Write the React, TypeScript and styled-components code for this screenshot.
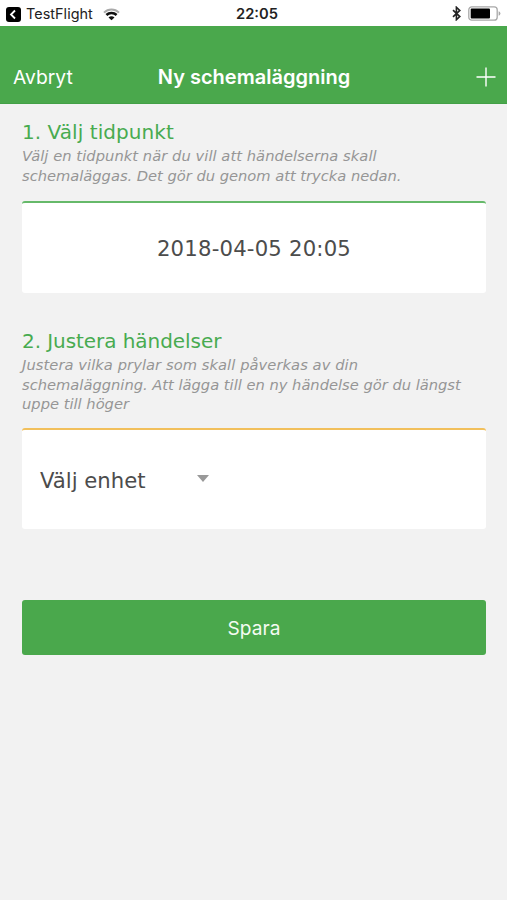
import React from "react";
import styled, { createGlobalStyle } from "styled-components";

const GlobalStyle = createGlobalStyle`
  * { box-sizing: border-box; }
  body { margin: 0; background: #f2f2f2; }
`;

const system = `"Inter", "Roboto", sans-serif`;
const body = `"DejaVu Sans", "Open Sans", sans-serif`;

const Screen = styled.div`
  display: flex;
  flex-direction: column;
  width: 507px;
  height: 900px;
  background: #f2f2f2;
  overflow: hidden;
  white-space: nowrap;
`;

const StatusBar = styled.div`
  display: grid;
  grid-template-columns: 1fr auto 1fr;
  align-items: center;
  height: 26px;
  padding: 2px 6px 0;
  background: #fff;
  color: #222;
  font: 400 14.4px/20px ${system};
`;

const StatusLeft = styled.div`
  display: flex;
  align-items: center;
`;

const BackLabel = styled.span`
  margin: 0 10px 0 5px;
  letter-spacing: 0.05px;
`;

const Clock = styled.span`
  font-size: 14.7px;
  font-weight: 600;
  padding-left: 7px;
`;

const StatusRight = styled.div`
  display: flex;
  align-items: center;
  justify-content: flex-end;
  gap: 7px;
  padding-bottom: 2px;
`;

const NavBar = styled.header`
  display: grid;
  grid-template-columns: 1fr auto 1fr;
  align-items: center;
  height: 78px;
  padding: 25px 11px 0 13px;
  background: #4aa84c;
  border-bottom: 1px solid #43a047;
  color: #fff;
`;

const NavButton = styled.button<{ $end?: boolean }>`
  display: flex;
  justify-self: ${(p) => (p.$end ? "end" : "start")};
  padding: 0;
  border: 0;
  background: none;
  color: inherit;
  font: 400 19.3px/24px ${system};
`;

const Title = styled.h1`
  margin: 0 1px 1px 0;
  font: 600 20px/24px ${system};
`;

const Content = styled.main`
  display: flex;
  flex-direction: column;
  padding: 16px 21px 0 22px;
`;

const Heading = styled.h2<{ $tracking: number }>`
  margin: 0;
  color: #48ab50;
  font: 400 20px/24px ${body};
  letter-spacing: ${(p) => p.$tracking}px;
`;

const Hint = styled.p`
  margin: 2px 0 0;
  color: #969696;
  font: italic 400 14.7px/19.5px ${body};
`;

const HintLine = styled.span<{ $tracking?: number }>`
  display: block;
  letter-spacing: ${(p) => p.$tracking ?? 0}px;
`;

const Card = styled.div<{ $accent: string; $height: number; $gap: number }>`
  display: flex;
  align-items: center;
  height: ${(p) => p.$height}px;
  margin-top: ${(p) => p.$gap}px;
  border-top: 2px solid ${(p) => p.$accent};
  border-radius: 3px;
  background: #fff;
  color: #4c4c4c;
`;

const DateValue = styled.span`
  flex: 1;
  padding-top: 1px;
  text-align: center;
  font: 400 21.2px/26px ${body};
  letter-spacing: 0.2px;
`;

const Section = styled.section<{ $gap?: number }>`
  margin-top: ${(p) => p.$gap ?? 0}px;
`;

const UnitSelect = styled.div`
  display: flex;
  align-items: center;
  justify-content: space-between;
  width: 169px;
  margin: 2px 0 0 18px;
  font: 400 21.2px/26px ${body};
`;

const Caret = styled.span`
  width: 0;
  height: 0;
  margin-top: -5px;
  border: 6px solid transparent;
  border-top: 7px solid #999;
  border-bottom: 0;
`;

const SaveButton = styled.button`
  height: 55px;
  margin-top: 71px;
  padding: 1px 0 0;
  border: 0;
  border-radius: 3px;
  background: #4aa84c;
  color: #f4fbf2;
  font: 400 19.1px/24px ${system};
`;

const BackIcon = () => (
  <svg width="15" height="15" viewBox="0 0 15 15">
    <rect width="15" height="15" rx="3" fill="#000" />
    <path d="M9 3.5 5 7.5l4 4" fill="none" stroke="#fff" strokeWidth="1.8" />
  </svg>
);

const WifiIcon = () => (
  <svg width="17" height="13" viewBox="0 0 17 13">
    <path d="M1 4.6a10.6 10.6 0 0 1 15 0" fill="none" stroke="#aaa" strokeWidth="2" />
    <path d="M3.4 7a7.2 7.2 0 0 1 10.2 0" fill="none" stroke="#111" strokeWidth="2.5" />
    <path d="M5.5 9.4a4.2 4.2 0 0 1 6 0L8.5 12.2z" fill="#111" />
  </svg>
);

const BluetoothIcon = () => (
  <svg width="9" height="15" viewBox="0 0 9 15">
    <path d="m1 4.2 6.8 6.4-3.4 3.1V1.3l3.4 3.1L1 10.8" fill="none" stroke="#222" strokeWidth="1.6" />
  </svg>
);

const BatteryIcon = () => (
  <svg width="33" height="15" viewBox="0 0 33 15">
    <rect x="0.8" y="0.8" width="28.4" height="13.4" rx="3" fill="#fff" stroke="#a8a8a8" strokeWidth="1.3" />
    <rect x="2.7" y="2.6" width="19.3" height="9.8" rx="1" fill="#000" />
    <path d="M30.6 5.2q1.8.6 1.8 2.3t-1.8 2.3z" fill="#a8a8a8" />
  </svg>
);

const PlusIcon = () => (
  <svg width="20" height="20" viewBox="0 0 20 20">
    <path d="M10 .5v19M.5 10h19" stroke="#fff" strokeWidth="1.4" />
  </svg>
);

export default function App() {
  return (
    <>
      <GlobalStyle />
      <Screen>
        <StatusBar>
          <StatusLeft>
            <BackIcon />
            <BackLabel>TestFlight</BackLabel>
            <WifiIcon />
          </StatusLeft>
          <Clock>22:05</Clock>
          <StatusRight>
            <BluetoothIcon />
            <BatteryIcon />
          </StatusRight>
        </StatusBar>
        <NavBar>
          <NavButton>Avbryt</NavButton>
          <Title>Ny schemaläggning</Title>
          <NavButton $end aria-label="Lägg till">
            <PlusIcon />
          </NavButton>
        </NavBar>
        <Content>
          <Section>
            <Heading $tracking={0.06}>1. Välj tidpunkt</Heading>
            <Hint>
              <HintLine $tracking={0.05}>Välj en tidpunkt när du vill att händelserna skall</HintLine>
              <HintLine $tracking={-0.02}>schemaläggas. Det gör du genom att trycka nedan.</HintLine>
            </Hint>
            <Card $accent="#66b96a" $height={92} $gap={16}>
              <DateValue>2018-04-05 20:05</DateValue>
            </Card>
          </Section>
          <Section $gap={36}>
            <Heading $tracking={-0.06}>2. Justera händelser</Heading>
            <Hint>
              <HintLine $tracking={0.06}>Justera vilka prylar som skall påverkas av din</HintLine>
              <HintLine $tracking={-0.01}>schemaläggning. Att lägga till en ny händelse gör du längst</HintLine>
              <HintLine>uppe till höger</HintLine>
            </Hint>
            <Card $accent="#f2c05c" $height={101} $gap={14.5}>
              <UnitSelect>
                Välj enhet
                <Caret />
              </UnitSelect>
            </Card>
          </Section>
          <SaveButton>Spara</SaveButton>
        </Content>
      </Screen>
    </>
  );
}
